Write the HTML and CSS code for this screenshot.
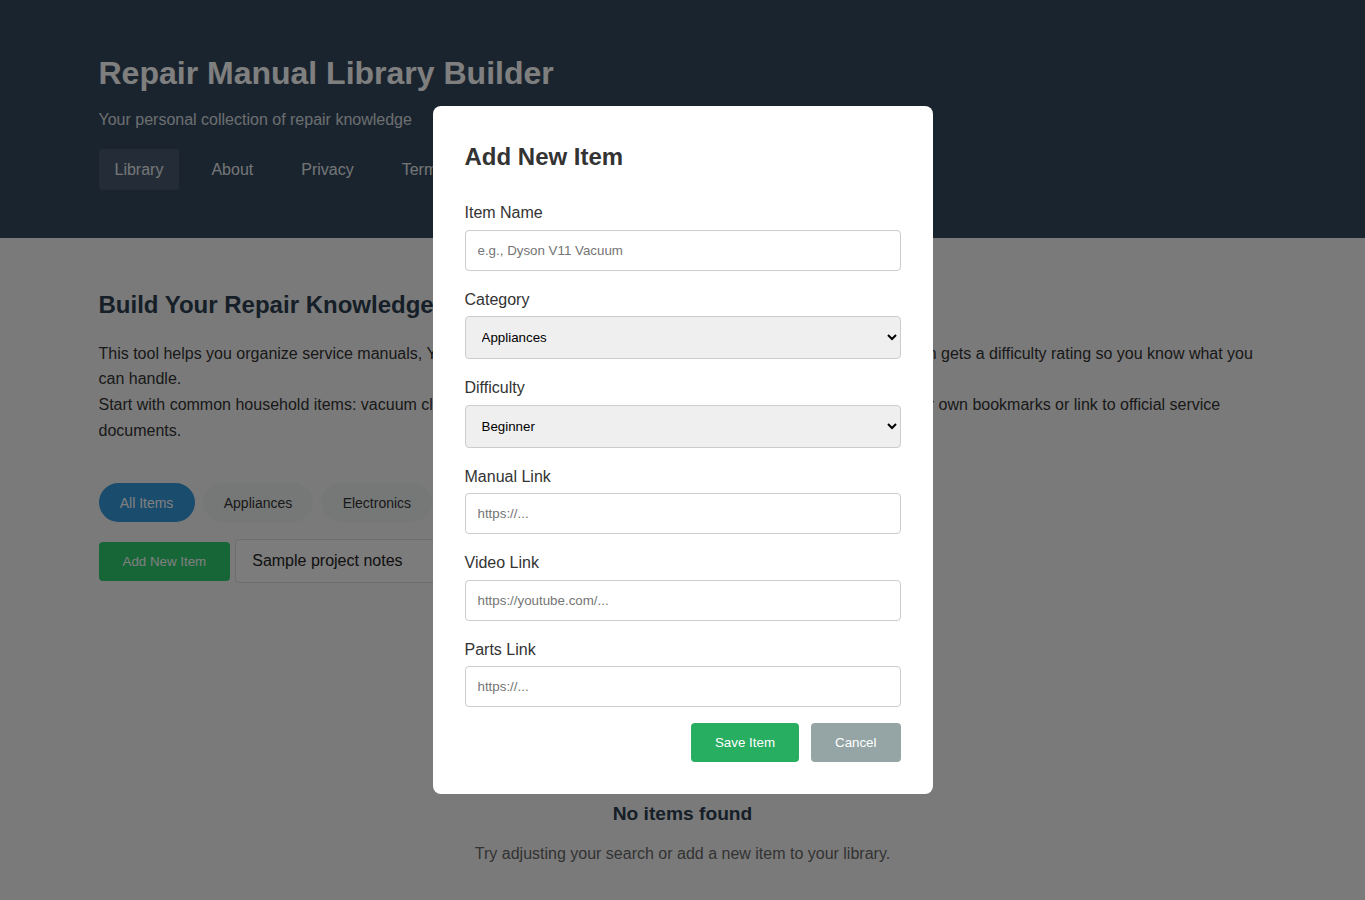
FILE: index.html
```html
<!DOCTYPE html>
<html lang="en">
<head>
<meta charset="utf-8">
<title>Repair Manual Library Builder</title>
<link rel="stylesheet" href="styles.css">
</head>
<body class="modal-open">
<header class="site-header">
  <div class="container">
    <h1 class="site-title">Repair Manual Library Builder</h1>
    <p class="site-subtitle">Your personal collection of repair knowledge</p>
    <nav class="site-nav">
      <a class="nav-link active" href="#">Library</a>
      <a class="nav-link" href="#">About</a>
      <a class="nav-link" href="#">Privacy</a>
      <a class="nav-link" href="#">Terms</a>
    </nav>
  </div>
</header>

<main class="container main">
  <section class="intro">
    <h2 class="intro-title">Build Your Repair Knowledge Base</h2>
    <p class="intro-text">This tool helps you organize service manuals, YouTube repair videos, and parts supplier URLs in one place. Each item gets a difficulty rating so you know what you can handle.<br>Start with common household items: vacuum cleaners, coffee makers, washing machines, and power tools. Save your own bookmarks or link to official service documents.</p>
  </section>

  <div class="filters">
    <button class="pill active">All Items</button>
    <button class="pill">Appliances</button>
    <button class="pill">Electronics</button>
    <button class="pill">Tools</button>
    <button class="pill">Vehicles</button>
  </div>

  <div class="controls">
    <button class="btn btn-add">Add New Item</button>
    <input class="search-input" type="text" value="Sample project notes">
  </div>

  <section class="empty-state">
    <div class="empty-icon">
      <svg width="64" height="64" viewBox="0 0 24 24" fill="none" stroke="#95a5a6" stroke-width="1.5" stroke-linecap="round" stroke-linejoin="round"><path d="M14.7 6.3a1 1 0 0 0 0 1.4l1.6 1.6a1 1 0 0 0 1.4 0l3.77-3.77a6 6 0 0 1-7.94 7.94l-6.91 6.91a2.12 2.12 0 0 1-3-3l6.91-6.910a6 6 0 0 1 7.94-7.94l-3.76 3.76z"/></svg>
    </div>
    <h3 class="empty-title">No items found</h3>
    <p class="empty-text">Try adjusting your search or add a new item to your library.</p>
  </section>
</main>

<div class="overlay">
  <div class="modal">
    <h2 class="modal-title">Add New Item</h2>
    <form class="modal-form">
      <div class="form-group">
        <label class="form-label" for="name">Item Name</label>
        <input class="form-control" id="name" type="text" placeholder="e.g., Dyson V11 Vacuum">
      </div>
      <div class="form-group">
        <label class="form-label" for="cat">Category</label>
        <select class="form-control form-select" id="cat">
          <option>Appliances</option>
          <option>Electronics</option>
          <option>Tools</option>
        </select>
      </div>
      <div class="form-group">
        <label class="form-label" for="diff">Difficulty</label>
        <select class="form-control form-select" id="diff">
          <option>Beginner</option>
          <option>Intermediate</option>
          <option>Advanced</option>
        </select>
      </div>
      <div class="form-group">
        <label class="form-label" for="manual">Manual Link</label>
        <input class="form-control" id="manual" type="url" placeholder="https://...">
      </div>
      <div class="form-group">
        <label class="form-label" for="video">Video Link</label>
        <input class="form-control" id="video" type="url" placeholder="https://youtube.com/...">
      </div>
      <div class="form-group">
        <label class="form-label" for="parts">Parts Link</label>
        <input class="form-control" id="parts" type="url" placeholder="https://...">
      </div>
      <div class="form-actions">
        <button type="button" class="btn btn-save">Save Item</button>
        <button type="button" class="btn btn-cancel">Cancel</button>
      </div>
    </form>
  </div>
</div>
</body>
</html>
```

FILE: styles.css
```css
* { box-sizing: border-box; }

html, body {
  margin: 0;
  padding: 0;
}

body {
  font-family: "Liberation Sans", Arial, sans-serif;
  line-height: 1.6;
  color: #333;
  background: #f5f5f5;
}

body.modal-open {
  overflow: hidden;
  height: 100vh;
}

.container {
  max-width: 1200px;
  margin: 0 auto;
  padding: 0 16px;
}

/* Header */
.site-header {
  background: #34495e;
  color: #fff;
  padding: 48px 0;
}

.site-title {
  margin: 0 0 8px;
  font-size: 32px;
  font-weight: bold;
}

.site-subtitle {
  margin: 0 0 16px;
  font-size: 16px;
  color: rgba(255, 255, 255, 0.82);
}

.site-nav {
  display: flex;
  gap: 16px;
}

.nav-link {
  color: rgba(255, 255, 255, 0.9);
  text-decoration: none;
  padding: 8px 16px;
  border-radius: 4px;
  font-size: 16px;
}

.nav-link.active {
  background: rgba(255, 255, 255, 0.1);
}

/* Main */
.main {
  padding-top: 48px;
}

.intro-title {
  margin: 0 0 16px;
  font-size: 24px;
  color: #2c3e50;
}

.intro-text {
  margin: 0 0 40px;
  font-size: 16px;
  color: #333;
}

.filters {
  display: flex;
  flex-wrap: wrap;
  gap: 8px;
  margin-bottom: 17px;
}

.pill {
  font-family: "Liberation Sans", Arial, sans-serif;
  font-size: 14px;
  padding: 9.6px 19.2px;
  border: 2px solid #ecf0f1;
  background: #ecf0f1;
  color: #333;
  border-radius: 20px;
}

.pill.active {
  background: #3498db;
  border-color: #3498db;
  color: #fff;
}

.controls {
  display: flex;
  align-items: center;
  gap: 5px;
  margin-bottom: 33px;
}

.btn {
  font-family: "Liberation Sans", Arial, sans-serif;
  font-size: 13.333px;
  padding: 12px 24px;
  border: none;
  border-radius: 4px;
  color: #fff;
  cursor: pointer;
}

.btn-add {
  background: #2ecc71;
}

.search-input {
  width: 400px;
  font-family: "Liberation Sans", Arial, sans-serif;
  font-size: 16px;
  padding: 12px 16px;
  border: 1px solid #ddd;
  border-radius: 4px;
  background: #f8f8f8;
  color: #222;
}

.empty-state {
  text-align: center;
  padding: 64px 16px;
}

.empty-icon {
  height: 104px;
  margin-bottom: 15px;
  display: flex;
  align-items: center;
  justify-content: center;
}

.empty-title {
  margin: 0 0 11px;
  font-size: 19.2px;
  color: #2c3e50;
}

.empty-text {
  margin: 0;
  font-size: 16px;
  color: #666;
}

/* Modal */
.overlay {
  position: fixed;
  inset: 0;
  background: rgba(0, 0, 0, 0.5);
  display: flex;
  align-items: center;
  justify-content: center;
}

.modal {
  width: 500px;
  background: #fff;
  border-radius: 8px;
  padding: 32px;
}

.modal-title {
  margin: 0 0 24px;
  font-size: 24px;
  color: #333;
}

.form-group {
  margin-bottom: 16px;
}

.form-label {
  display: block;
  margin-bottom: 4px;
  font-size: 16px;
  color: #333;
}

.form-control {
  display: block;
  width: 100%;
  padding: 12px;
  border: 1px solid #ccc;
  border-radius: 4px;
  font-family: "Liberation Sans", Arial, sans-serif;
  font-size: 13.333px;
  color: #222;
}

.form-control::placeholder {
  color: #757575;
}

.form-select {
  background-color: #efefef;
  color: #000;
}

.form-actions {
  display: flex;
  justify-content: flex-end;
  gap: 12px;
}

.btn-save {
  background: #27ae60;
}

.btn-cancel {
  background: #95a5a6;
}
```
